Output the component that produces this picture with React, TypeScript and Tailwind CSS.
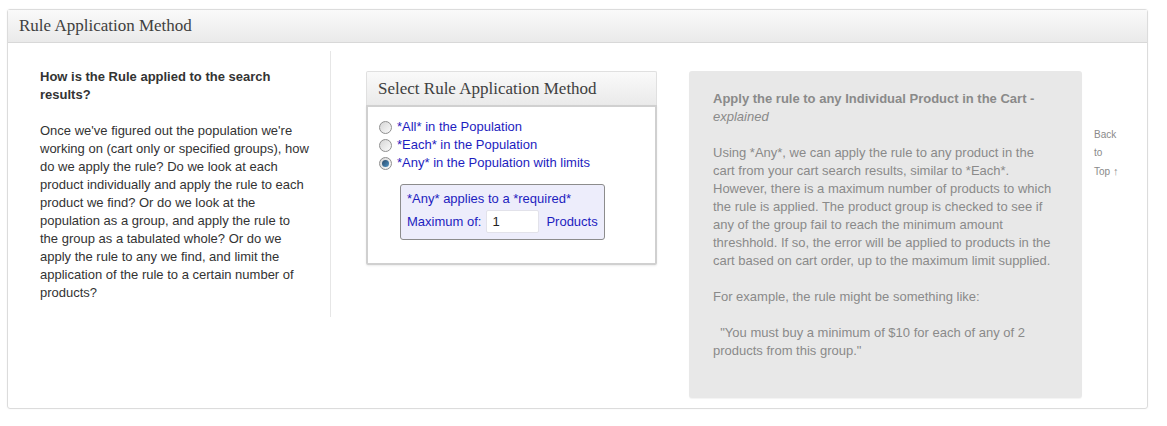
import React from "react";

const sans = { fontFamily: '"Liberation Sans", Arial, sans-serif' };

function Radio({ checked }: { checked?: boolean }) {
  return (
    <span className="relative inline-flex h-[13px] w-[13px] shrink-0 items-center justify-center rounded-full border border-[#8f8f8f] bg-gradient-to-br from-[#d6d6d6] to-[#fbfbfb]">
      {checked && (
        <span className="h-[7px] w-[7px] rounded-full bg-gradient-to-br from-[#2a4a6a] to-[#4f93c4]" />
      )}
    </span>
  );
}

const methods = [
  { label: "*All* in the Population" },
  { label: "*Each* in the Population" },
  { label: "*Any* in the Population with limits", checked: true },
];

export default function App() {
  return (
    <div className="min-h-[426px] bg-white pl-[7px] pt-[9px] pr-[19px]" style={sans}>
      <div className="flex h-[400px] w-[1141px] flex-col rounded-[3px] border border-[#dcdcdc] shadow-[0_0_2px_rgba(0,0,0,0.06)]">
        <div className="flex h-[33px] shrink-0 items-center border-b border-[#d8d8d8] bg-gradient-to-b from-[#fafafa] to-[#eaeaea] pl-[11px]">
          <h2 className="font-['Liberation_Serif',serif] text-[17px] text-[#404040]">Rule Application Method</h2>
        </div>

        <div className="flex items-start">
          {/* left: explanation */}
          <div className="mt-2 w-[323px] shrink-0 border-r border-[#e6e6e6] pb-[15px] pl-8 pr-[19px] pt-[17px] text-[13px] leading-[18px] text-[#333]">
            <h3 className="font-bold">How is the Rule applied to the search results?</h3>
            <p className="mt-[18px]">
              Once we've figured out the population we're working on (cart only or specified groups), how do we apply
              the rule? Do we look at each product individually and apply the rule to each product we find? Or do we
              look at the population as a group, and apply the rule to the group as a tabulated whole? Or do we apply
              the rule to any we find, and limit the application of the rule to a certain number of products?
            </p>
          </div>

          {/* middle: selector */}
          <div className="ml-[35px] mt-[28px] w-[291px] shrink-0">
            <div className="flex h-[34px] items-center rounded-t-[2px] border border-b-0 border-[#e0e0e0] bg-gradient-to-b from-[#fafafa] to-[#eaeaea] pl-[11px]">
              <h4 className="font-['Liberation_Serif',serif] text-[17px] text-[#404040]">Select Rule Application Method</h4>
            </div>
            <div className="h-[160px] rounded-b-[2px] border-2 border-[#d0d0d0] pl-[11px] pt-[11px] text-[13px] leading-[18px] text-[#1d1dc0] shadow-[0_1px_2px_rgba(0,0,0,0.08)]">
              {methods.map((m) => (
                <label key={m.label} className="flex items-center gap-[5px]">
                  <Radio checked={m.checked} />
                  <span>{m.label}</span>
                </label>
              ))}
              <div className="ml-[21px] mt-[12px] w-[205px] rounded-[3px] border border-[#8c8c8c] bg-[#ededfb] px-[6px] pb-[4px] pt-[5px]">
                <div className="whitespace-nowrap">*Any* applies to a *required*</div>
                <div className="flex h-[27px] items-center whitespace-nowrap">
                  <span className="shrink-0">Maximum of:</span>
                  <input
                    readOnly
                    value="1"
                    className="ml-[5px] h-[23px] w-[53px] shrink-0 rounded-[2px] border border-[#e2e2ea] bg-white pl-[5px] text-[13px] text-[#222] outline-none"
                  />
                  <span className="ml-[7px] shrink-0">Products</span>
                </div>
              </div>
            </div>
          </div>

          {/* right: explained */}
          <div className="ml-[32px] mt-[28px] h-[327px] w-[393px] shrink-0 rounded-[3px] bg-[#e8e8e8] pl-6 pr-[30px] pt-[19px] text-[13px] leading-[18px] text-[#8a8a8a] shadow-[0_1px_1px_rgba(0,0,0,0.05)]">
            <h3 className="whitespace-nowrap font-bold">Apply the rule to any Individual Product in the Cart -</h3>
            <div className="italic">explained</div>
            <p className="mt-[18px]">
              Using *Any*, we can apply the rule to any product in the cart from your cart search results, similar to
              *Each*. However, there is a maximum number of products to which the rule is applied. The product group
              is checked to see if any of the group fail to reach the minimum amount threshhold. If so, the error will
              be applied to products in the cart based on cart order, up to the maximum limit supplied.
            </p>
            <p className="mt-[18px]">For example, the rule might be something like:</p>
            <p className="mt-[18px]">
              &nbsp;&nbsp;"You must buy a minimum of $10 for each of any of 2 products from this group."
            </p>
          </div>

          {/* back to top */}
          <a href="#" className="ml-3 mt-[83px] w-[40px] text-[10px] leading-[18px] text-[#8a8a8a]">
            Back
            <br />
            to
            <br />
            Top <span className="text-[11px]">↑</span>
          </a>
        </div>
      </div>
    </div>
  );
}
